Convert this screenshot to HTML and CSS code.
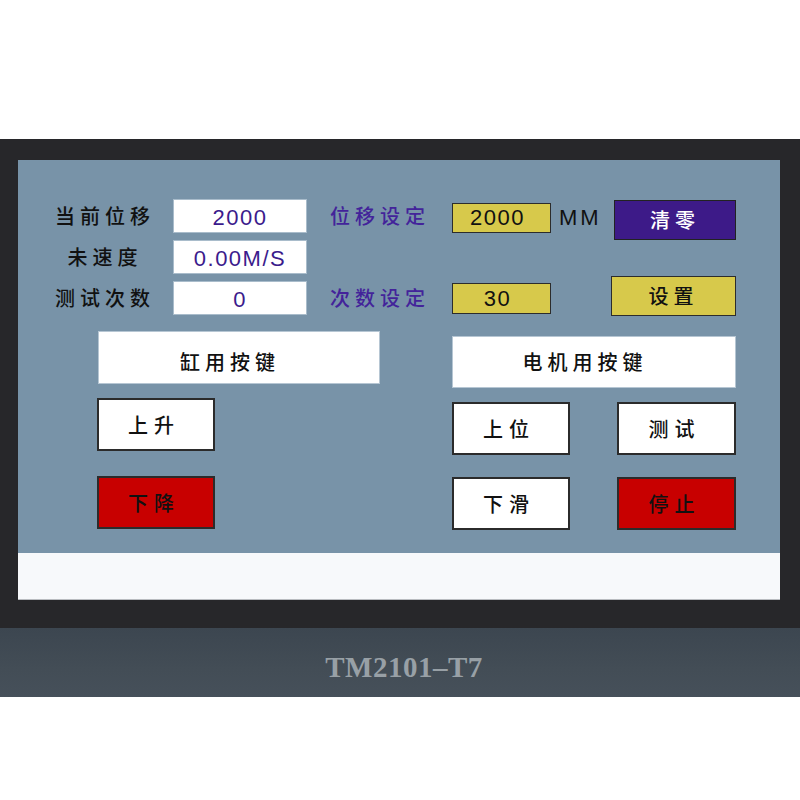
FILE: index.html
```html
<!DOCTYPE html>
<html lang="zh">
<head>
<meta charset="utf-8">
<title>TM2101-T7</title>
<link rel="stylesheet" href="styles.css">
</head>
<body>
<div class="device">
  <div class="screen">
    <div class="panel">
      <div class="params">
        <div class="lbl r1">当前位移</div>
        <div class="val r1">2000</div>
        <div class="setlbl r1">位移设定</div>
        <div class="yel r1 y-top">2000</div>
        <div class="unit r1">MM</div>
        <div class="btn-purple r1">清零</div>

        <div class="lbl r2">未速度</div>
        <div class="val r2">0.00M/S</div>

        <div class="lbl r3">测试次数</div>
        <div class="val r3">0</div>
        <div class="setlbl r3">次数设定</div>
        <div class="yel r3 y-bot">30</div>
        <div class="btn-yellow r3">设置</div>
      </div>

      <div class="keys">
        <div class="group group-cyl">
          <div class="head">缸用按键</div>
          <div class="key">上升</div>
          <div class="key key-red key-gap">下降</div>
        </div>
        <div class="group group-motor">
          <div class="head">电机用按键</div>
          <div class="key-grid">
            <div class="key">上位</div>
            <div class="key">测试</div>
            <div class="key">下滑</div>
            <div class="key key-red">停止</div>
          </div>
        </div>
      </div>
    </div>
    <div class="status"></div>
  </div>
</div>
<div class="base"><span class="model">TM2101–T7</span></div>
</body>
</html>
```

FILE: styles.css
```css
* { box-sizing: border-box; }

html, body {
  margin: 0;
  padding: 0;
  background: #ffffff;
}

body {
  font-family: "Liberation Sans", "Noto Sans CJK SC", sans-serif;
  width: 800px;
}

.device {
  margin-top: 139px;
  background: #27272a;
  padding: 21px 20px 28px 18px;
}

.screen {
  height: 440px;
  display: flex;
  flex-direction: column;
}

.panel {
  height: 393px;
  background: #7893a8;
  padding: 39px 0 0 32px;
}

.status {
  height: 47px;
  background: #f7f9fb;
  border-bottom: 1px solid #b9bcc0;
}

/* ---------- parameter grid ---------- */
.params {
  display: grid;
  grid-template-columns: 123px 157px 122px 99px 60px 125px;
  grid-template-rows: 34px 34px 34px;
  row-gap: 7px;
  align-items: center;
}

.r1 { grid-row: 1; }
.r2 { grid-row: 2; }
.r3 { grid-row: 3; }

.lbl {
  grid-column: 1;
  width: 105px;
  text-align: center;
  font-family: "Noto Sans CJK SC", sans-serif;
  font-weight: 500;
  font-size: 20px;
  line-height: 24px;
  letter-spacing: 5px;
  color: #111;
  padding-left: 5px;
}

.val {
  grid-column: 2;
  width: 134px;
  height: 34px;
  background: #ffffff;
  border: 1px solid #a9bccb;
  color: #3b1b8c;
  font-size: 22px;
  line-height: 32px;
  padding-top: 2px;
  letter-spacing: 1.5px;
  text-align: center;
}

.setlbl {
  grid-column: 3;
  font-family: "Noto Sans CJK SC", sans-serif;
  font-weight: 500;
  font-size: 20px;
  line-height: 24px;
  letter-spacing: 5px;
  color: #43239a;
}

.yel {
  grid-column: 4;
  align-self: start;
  background: #d7c94b;
  border: 1.5px solid #2c2c2c;
  color: #111;
  font-size: 22px;
  letter-spacing: 1.5px;
  text-align: center;
  padding-right: 8px;
}

.y-top {
  margin-top: 4px;
  height: 30px;
  line-height: 28px;
}

.y-bot {
  margin-top: 2px;
  height: 31px;
  line-height: 29px;
}

.unit {
  grid-column: 5;
  padding: 4px 0 0 8px;
  font-size: 22px;
  letter-spacing: 3px;
  color: #111;
}

.btn-purple {
  grid-column: 6;
  align-self: start;
  margin: 1px 0 0 3px;
  height: 40px;
  background: #3d1a88;
  border: 1.5px solid #222;
  color: #ffffff;
  font-family: "Noto Sans CJK SC", sans-serif;
  font-weight: 500;
  font-size: 20px;
  line-height: 37px;
  letter-spacing: 5px;
  text-align: center;
}

.btn-yellow {
  grid-column: 6;
  align-self: start;
  margin-top: -5px;
  height: 40px;
  background: #d7c94b;
  border: 1.5px solid #2c2c2c;
  color: #111;
  font-family: "Noto Sans CJK SC", sans-serif;
  font-weight: 500;
  font-size: 20px;
  line-height: 37px;
  letter-spacing: 5px;
  text-align: center;
}

/* ---------- key groups ---------- */
.keys {
  display: flex;
  align-items: flex-start;
  gap: 72px;
  padding-left: 48px;
}

.group {
  display: flex;
  flex-direction: column;
}

.group-cyl {
  width: 282px;
  margin-top: 16px;
}

.group-motor {
  width: 284px;
  margin-top: 21px;
}

.head {
  background: #ffffff;
  border: 1px solid #b6c6d3;
  font-family: "Noto Sans CJK SC", sans-serif;
  font-weight: 500;
  font-size: 20px;
  letter-spacing: 5px;
  color: #111;
  text-align: center;
  padding-right: 18px;
}

.group-cyl .head {
  height: 53px;
  line-height: 51px;
  padding-top: 4px;
  margin-bottom: 14px;
}

.group-motor .head {
  height: 52px;
  line-height: 50px;
  margin-bottom: 14px;
}

.key {
  width: 118px;
  height: 53px;
  background: #ffffff;
  border: 2px solid #2b2b2b;
  font-family: "Noto Sans CJK SC", sans-serif;
  font-weight: 500;
  font-size: 20px;
  line-height: 49px;
  letter-spacing: 6px;
  color: #111;
  text-align: center;
  padding-right: 4px;
}

.group-cyl .key { margin-left: -1px; }

.key-gap { margin-top: 25px; }

.key-red {
  background: #c80000;
}

.key-grid {
  display: grid;
  grid-template-columns: 118px 119px;
  column-gap: 47px;
  row-gap: 22px;
}

.key-grid .key { width: auto; }

/* ---------- lower bezel ---------- */
.base {
  height: 69px;
  background: linear-gradient(180deg, #3c4650 0%, #434d56 60%, #46505a 100%);
  text-align: center;
  padding: 23px 0 0 8px;
}

.model {
  display: inline-block;
  font-family: "Liberation Serif", serif;
  font-weight: bold;
  font-size: 29px;
  line-height: 32px;
  letter-spacing: 0.5px;
  color: #98a0a6;
}
```
